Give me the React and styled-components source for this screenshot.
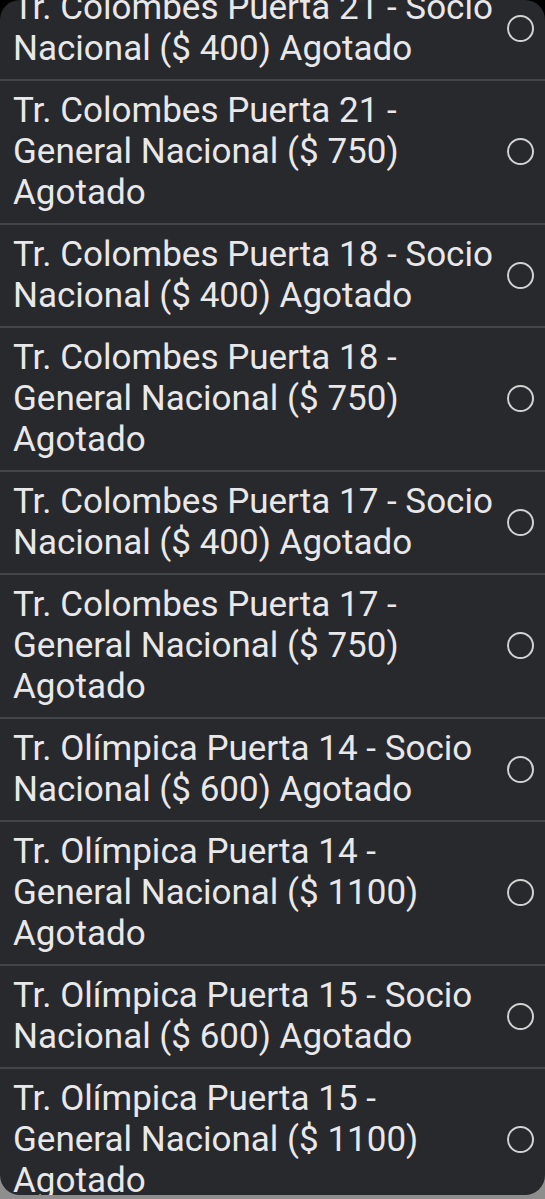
import React from "react";
import styled, { createGlobalStyle } from "styled-components";

const GlobalStyle = createGlobalStyle`
  html, body {
    margin: 0;
    padding: 0;
    height: 100%;
    background: linear-gradient(#000 50%, #8e8e8e 50%);
  }
  body {
    font-family: Roboto, "Noto Sans", sans-serif;
    -webkit-font-smoothing: antialiased;
  }
`;

const options = [
  { gate: "Tr. Colombes Puerta 21", kind: "Socio Nacional", price: 400 },
  { gate: "Tr. Colombes Puerta 21", kind: "General Nacional", price: 750 },
  { gate: "Tr. Colombes Puerta 18", kind: "Socio Nacional", price: 400 },
  { gate: "Tr. Colombes Puerta 18", kind: "General Nacional", price: 750 },
  { gate: "Tr. Colombes Puerta 17", kind: "Socio Nacional", price: 400 },
  { gate: "Tr. Colombes Puerta 17", kind: "General Nacional", price: 750 },
  { gate: "Tr. Olímpica Puerta 14", kind: "Socio Nacional", price: 600 },
  { gate: "Tr. Olímpica Puerta 14", kind: "General Nacional", price: 1100 },
  { gate: "Tr. Olímpica Puerta 15", kind: "Socio Nacional", price: 600 },
  { gate: "Tr. Olímpica Puerta 15", kind: "General Nacional", price: 1100 },
];

export default function App() {
  return (
    <>
      <GlobalStyle />
      <Sheet>
        <List>
          {options.map((o, i) => (
            <Option key={i}>
              <Label>
                {o.gate} - {o.kind} ($ {o.price}) Agotado
              </Label>
              <Radio />
            </Option>
          ))}
        </List>
      </Sheet>
    </>
  );
}

const Sheet = styled.div`
  height: 1195px;
  background: #28292d;
  border-radius: 20px;
  overflow: hidden;
`;

const List = styled.ul`
  list-style: none;
  margin: -22px 0 0;
  padding: 0;
`;

const Option = styled.li`
  display: flex;
  align-items: center;
  gap: 10px;
  padding: 9px 11px 10px 13px;
  border-bottom: 2px solid #444549;
`;

const Label = styled.span`
  flex: 1;
  font-size: 35px;
  line-height: 41px;
  color: #e8e8ea;
`;

const Radio = styled.span`
  flex: none;
  width: 23px;
  height: 23px;
  border-radius: 50%;
  border: 2.5px solid #d2d2d4;
`;
